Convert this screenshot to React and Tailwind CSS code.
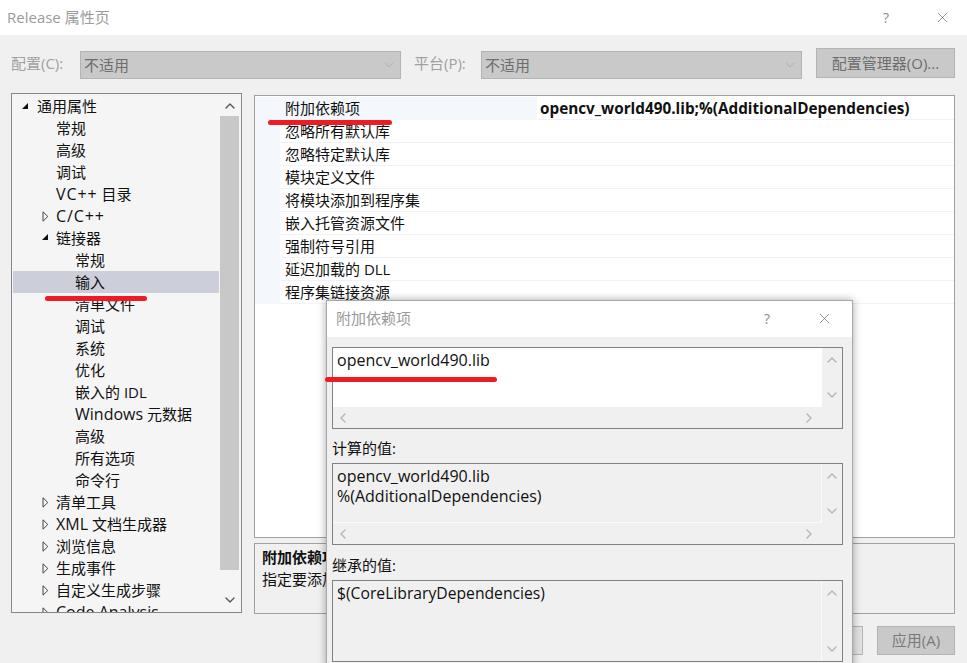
import { ChevronUp, ChevronDown, ChevronLeft, ChevronRight, X } from 'lucide-react';

const FONT = 'font-["Open_Sans","Noto_Sans_CJK_SC",sans-serif]';

const treeItems = [
  { label: '通用属性', level: 0, arrow: 'open' },
  { label: '常规', level: 1 },
  { label: '高级', level: 1 },
  { label: '调试', level: 1 },
  { latin: 'VC++', wide: true, label: ' 目录', level: 1 },
  { latin: 'C/C++', wide: true, label: '', level: 1, arrow: 'closed' },
  { label: '链接器', level: 1, arrow: 'open' },
  { label: '常规', level: 2 },
  { label: '输入', level: 2, selected: true },
  { label: '清单文件', level: 2 },
  { label: '调试', level: 2 },
  { label: '系统', level: 2 },
  { label: '优化', level: 2 },
  { label: '嵌入的 IDL', level: 2 },
  { latin: 'Windows', label: ' 元数据', level: 2 },
  { label: '高级', level: 2 },
  { label: '所有选项', level: 2 },
  { label: '命令行', level: 2 },
  { label: '清单工具', level: 1, arrow: 'closed' },
  { latin: 'XML', label: ' 文档生成器', level: 1, arrow: 'closed' },
  { label: '浏览信息', level: 1, arrow: 'closed' },
  { label: '生成事件', level: 1, arrow: 'closed' },
  { label: '自定义生成步骤', level: 1, arrow: 'closed' },
  { latin: 'Code Analysis', label: '', level: 1, arrow: 'closed' },
];

const gridRows = ['附加依赖项', '忽略所有默认库', '忽略特定默认库', '模块定义文件', '将模块添加到程序集', '嵌入托管资源文件', '强制符号引用', '延迟加载的 DLL', '程序集链接资源'];

function TreeArrow({ type }) {
  if (type === 'open') {
    return (
      <svg width="8" height="8" viewBox="0 0 8 8" className="block">
        <path d="M7 1V7H1Z" fill="#111" />
      </svg>
    );
  }
  return (
    <svg width="7" height="11" viewBox="0 0 7 11" className="block">
      <path d="M1 .8 5.8 5.5 1 10.2Z" fill="none" stroke="#444" />
    </svg>
  );
}

function TreeRow({ item }) {
  const pad = ['pl-[24px]', 'pl-[43px]', 'pl-[62px]'][item.level];
  let arrowPos = 'left-[28px] top-[6px]';
  if (item.level === 0) arrowPos = 'left-[8px] top-[7px]';
  if (item.arrow === 'closed') arrowPos = 'left-[29px] top-[6px]';
  return (
    <div className={`relative h-[22px] shrink-0 leading-[22px] whitespace-nowrap text-[15px] text-[#111] ${pad} ${item.selected ? 'bg-[#ccced9]' : ''}`}>
      {item.arrow && (
        <span className={`absolute ${arrowPos}`}>
          <TreeArrow type={item.arrow} />
        </span>
      )}
      {item.latin && <span className={`text-[16px] ${item.wide ? 'tracking-[0.9px]' : ''}`}>{item.latin}</span>}
      {item.label}
    </div>
  );
}

function Combo({ value }) {
  return (
    <div className="flex h-[28px] w-[321px] items-center justify-between border border-[#b4b4b4] bg-[#c9c9c9] pl-[3px] pr-[4px] text-[15px] text-[#6d6d6d]">
      <span>{value}</span>
      <ChevronDown size={14} strokeWidth={1} className="text-[#9a9a9a]" />
    </div>
  );
}

function VScroll() {
  return (
    <div className="flex w-[20px] flex-col items-center justify-between py-[4px] text-[#b4b4b4]">
      <ChevronUp size={16} strokeWidth={2} />
      <ChevronDown size={16} strokeWidth={2} />
    </div>
  );
}

function ScrollBox({ lines, white }) {
  return (
    <div className="flex h-[82px] w-[511px] flex-col border border-[#828282] text-[16px] leading-[20px] text-[#111]">
      <div className="flex min-h-0 flex-1">
        <div className={`flex-1 pl-[4px] pt-[2px] ${white ? 'bg-white' : 'border-b border-r border-[#fafafa]'}`}>
          {lines.map((l) => (
            <div key={l}>{l}</div>
          ))}
        </div>
        <VScroll />
      </div>
      <div className="flex h-[21px] shrink-0 items-center justify-between pl-[2px] pr-[25px] text-[#b4b4b4]">
        <ChevronLeft size={16} strokeWidth={2} />
        <ChevronRight size={16} strokeWidth={2} />
      </div>
    </div>
  );
}

function InheritBox() {
  return (
    <div className="flex h-[82px] w-[511px] border border-[#828282] text-[15.7px] leading-[20px] text-[#111]">
      <div className="flex-1 border-r border-[#fafafa] pl-[4px] pt-[2px]">$(CoreLibraryDependencies)</div>
      <VScroll />
    </div>
  );
}

function DependencyDialog() {
  return (
    <div className="absolute left-[326px] top-[300px] flex h-[370px] w-[527px] flex-col border border-[#a8a8a8] bg-[#f0f0f0] shadow-[0_0_8px_rgba(0,0,0,0.35)]">
      <div className="flex h-[36px] shrink-0 items-center bg-white pb-[2px] pl-[9px] text-[15px] text-[#9a9a9a]">
        <span className="flex-1">附加依赖项</span>
        <span className="mr-[46px] text-[14px] text-[#8a8a8a]">?</span>
        <X size={17} strokeWidth={1} className="mr-[19px] text-[#6a6a6a]" />
      </div>
      <div className="flex flex-col pl-[5px] pt-[10px]">
        <ScrollBox white lines={['opencv_world490.lib']} />
        <div className="flex h-[34px] items-end pb-[5px] text-[15px] leading-[20px] text-[#111]">计算的值:</div>
        <ScrollBox lines={['opencv_world490.lib', '%(AdditionalDependencies)']} />
        <div className="flex h-[35px] items-end pb-[5px] text-[15px] leading-[20px] text-[#111]">继承的值:</div>
        <InheritBox />
      </div>
    </div>
  );
}

export default function App() {
  return (
    <div className={`relative h-[663px] w-[967px] overflow-hidden bg-[#f0f0f0] ${FONT}`}>
      {/* title bar */}
      <div className="flex h-[35px] items-center bg-white pl-[7px] text-[15px] text-[#9a9a9a]">
        <span className="flex-1">Release 属性页</span>
        <span className="mr-[45px] text-[14px] text-[#8a8a8a]">?</span>
        <X size={17} strokeWidth={1} className="mr-[16px] text-[#6a6a6a]" />
      </div>

      {/* config row */}
      <div className="mt-[13px] flex h-[31px] items-start pl-[11px] text-[15px] text-[#a0a0a0]">
        <span className="mt-[4px] w-[69px]">配置(C):</span>
        <div className="mt-[3px]"><Combo value="不适用" /></div>
        <span className="ml-[13px] mt-[4px] w-[67px]">平台(P):</span>
        <div className="mt-[3px]"><Combo value="不适用" /></div>
        <div className="ml-[14px] flex h-[30px] w-[139px] items-center justify-center border border-[#b4b4b4] bg-[#c9c9c9] text-[#6d6d6d]">配置管理器(O)...</div>
      </div>

      <div className="mt-[14px] flex items-start pl-[11px]">
        {/* category tree */}
        <div className="flex h-[520px] w-[231px] overflow-hidden border border-[#828790] bg-[#f5f5f5] pt-[1px] pl-[1px]">
          <div className="flex h-full w-[206px] shrink-0 flex-col overflow-hidden">
            {treeItems.map((item, i) => (
              <TreeRow key={i} item={item} />
            ))}
          </div>
          <div className="ml-[1px] flex w-[19px] shrink-0 flex-col items-center">
            <div className="flex h-[21px] shrink-0 items-center justify-center text-[#555]">
              <ChevronUp size={16} strokeWidth={2} />
            </div>
            <div className="h-[454px] w-full bg-[#c8c8c8]" />
            <div className="flex flex-1 items-end justify-center pb-[4px] text-[#555]">
              <ChevronDown size={16} strokeWidth={2} />
            </div>
          </div>
        </div>

        {/* property grid + description */}
        <div className="ml-[12px] mt-[2px] flex w-[701px] flex-col gap-[5px]">
          <div className="h-[443px] border border-[#a0a0a0] bg-white pt-[1px]">
            {gridRows.map((label, i) => (
              <div key={label} className="flex h-[23px] text-[15px] leading-[23px] text-[#111]">
                <div className="w-[25px] shrink-0 bg-[#f4f7fb]" />
                <div className={`w-[257px] shrink-0 pl-[5px] whitespace-nowrap ${i === 0 ? 'bg-[#f4f7fb]' : 'border-b border-[#f0f2f7]'}`}>{label}</div>
                <div className="flex-1 border-b border-[#f0f2f7] pl-[3px] text-[15.3px] font-bold">
                  {i === 0 ? 'opencv_world490.lib;%(AdditionalDependencies)' : ''}
                </div>
              </div>
            ))}
          </div>
          <div className="h-[71px] border border-[#a0a0a0] pl-[7px] pt-[2px] text-[15px] leading-[22px] text-[#111]">
            <div className="font-bold">附加依赖项</div>
            <div>指定要添加到链接命令行的附加项。</div>
          </div>
        </div>
      </div>

      {/* bottom buttons, mostly covered by the dialog */}
      <div className="mt-[12px] flex justify-end gap-[14px] pr-[12px]">
        <div className="h-[29px] w-[78px] border border-[#b4b4b4] bg-[#e1e1e1]" />
        <div className="flex h-[29px] w-[78px] items-center justify-center border border-[#b4b4b4] bg-[#c9c9c9] text-[15px] text-[#7a7a7a]">应用(A)</div>
      </div>

      <DependencyDialog />

      {/* red annotations */}
      <div className="absolute left-[268px] top-[120px] h-[5px] w-[124px] rounded-full bg-[#ed1c24]" />
      <div className="absolute left-[45px] top-[296px] h-[5px] w-[102px] rounded-full bg-[#ed1c24]" />
      <div className="absolute left-[325px] top-[377px] h-[5px] w-[172px] rounded-full bg-[#ed1c24]" />
    </div>
  );
}
